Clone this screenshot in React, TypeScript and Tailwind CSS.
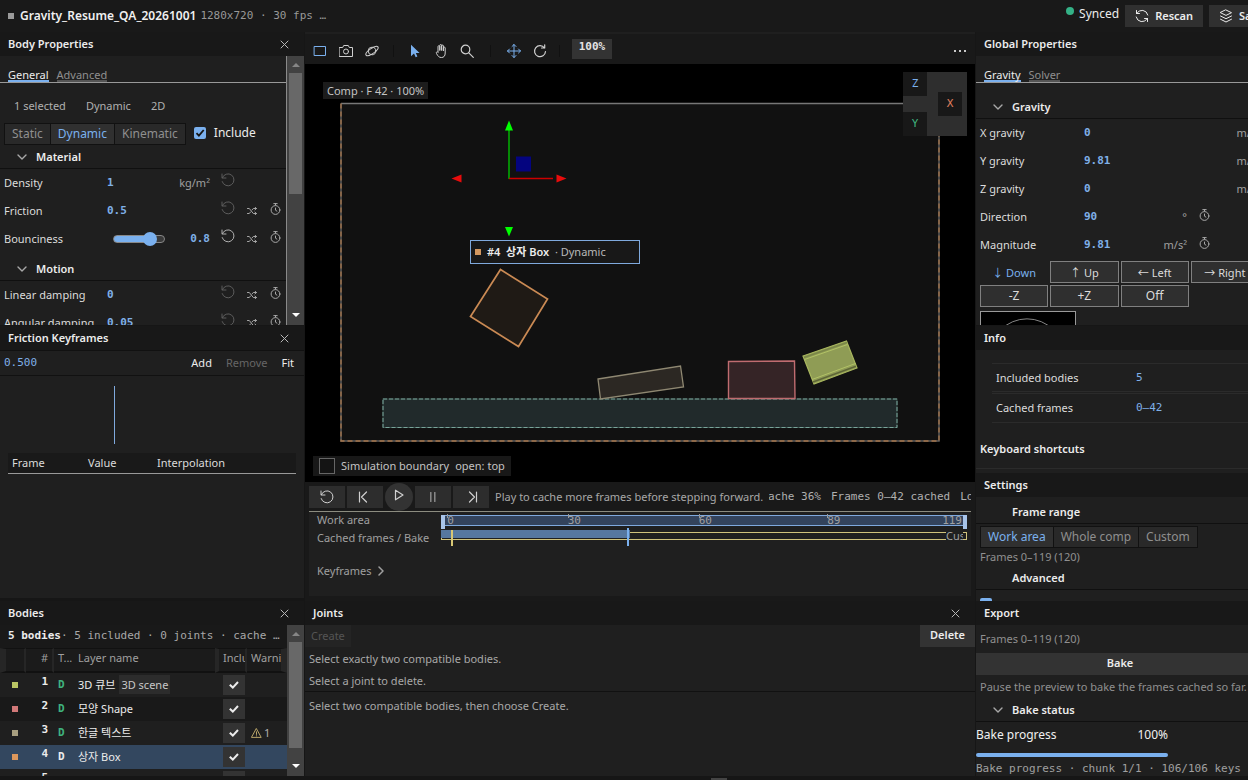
import React, { ReactNode, useState } from "react";

const svgProps = {
  fill: "none",
  stroke: "currentColor",
  strokeLinecap: "round" as const,
  strokeLinejoin: "round" as const,
};

const CloseIcon = () => (
  <svg width="9" height="9" viewBox="0 0 9 9" {...svgProps}>
    <path d="M1 1l7 7M8 1l-7 7" />
  </svg>
);
const ChevronDown = () => (
  <svg width="10" height="6" viewBox="0 0 10 6" {...svgProps} strokeWidth={1.4}>
    <path d="M1 1l4 4 4-4" />
  </svg>
);
const ResetIcon = ({ size = 14 }: { size?: number }) => (
  <svg width={size} height={size} viewBox="0 0 14 14" {...svgProps}>
    <path d="M1 1v4h4" />
    <path d="M1.3 4.8A6 6 0 1 1 1.2 8.6" />
  </svg>
);
const ShuffleIcon = () => (
  <svg width="10" height="8" viewBox="0 0 10 8" {...svgProps}>
    <path d="M.5 1.5h1.8l4 5h3M.5 6.5h1.8l1.2-1.5M5 3l1.3-1.5h3M8 .2l1.5 1.3L8 2.8M8 5.2l1.5 1.3L8 7.8" />
  </svg>
);
const StopwatchIcon = () => (
  <svg width="11" height="12" viewBox="0 0 11 12" {...svgProps}>
    <path d="M3.8.6h3.4M5.5.6v1.5M5.5 5v2.2l1.4.9" />
    <circle cx="5.5" cy="7" r="4.4" />
  </svg>
);

const Panel = ({ title, onClose, className, children }: { title: string; onClose?: boolean; className: string; children: ReactNode }) => (
  <section className={`flex min-w-0 flex-col overflow-hidden bg-[#1f1f1f] ${className}`}>
    <header className="flex h-6 shrink-0 items-center justify-between bg-[#181818] pr-[15px] pl-2">
      <h2 className="text-[11px] font-semibold text-[#ececec]">{title}</h2>
      {onClose && (
        <button aria-label={`Close ${title}`} className="text-[#b8b8b8]">
          <CloseIcon />
        </button>
      )}
    </header>
    {children}
  </section>
);

const Tabs = ({ items }: { items: string[] }) => (
  <div className="flex h-[27px] shrink-0 items-end gap-2 border-b border-[#999] px-2">
    {items.map((t, i) => (
      <button
        key={t}
        className={
          i === 0
            ? "h-[14px] border-b-2 border-[#7ab0ee] leading-[14px] text-[#ececec]"
            : "h-[14px] border-b-2 border-[#555] leading-[14px] text-[#8f8f8f]"
        }
      >
        {t}
      </button>
    ))}
  </div>
);

const Group = ({ title, chevron = true }: { title: string; chevron?: boolean }) => (
  <h3 className="flex h-6 shrink-0 items-center border-b border-[#101010] text-[11px] font-semibold text-[#ececec]">
    <span className="w-9 pl-[17px] text-[#a8a8a8]">{chevron && <ChevronDown />}</span>
    {title}
  </h3>
);

const Segmented = ({ items, active }: { items: string[]; active: string }) => (
  <div className="flex h-[22px] w-max border border-[#111] bg-[#292929] text-xs">
    {items.map((t) => (
      <button
        key={t}
        className={
          t === active
            ? "border-r border-[#111] bg-[#303030] px-[7px] text-[#7ab0ee] last:border-r-0"
            : "border-r border-[#111] px-[7px] text-[#8f8f8f] last:border-r-0"
        }
      >
        {t}
      </button>
    ))}
  </div>
);

const Scrollbar = ({ thumb }: { thumb: string }) => (
  <div className="flex w-[17px] shrink-0 flex-col items-center bg-[#424242]">
    <span className="flex h-[17px] items-center">
      <svg width="8" height="4" viewBox="0 0 8 4">
        <path d="M4 0l4 4H0z" fill="#868686" />
      </svg>
    </span>
    <span className={`w-[13px] bg-[#686868] ${thumb}`} />
    <span className="mt-auto flex h-5 items-center">
      <svg width="8" height="4" viewBox="0 0 8 4">
        <path d="M4 4l4-4H0z" fill="#fff" />
      </svg>
    </span>
  </div>
);

interface IField {
  label: string;
  value: string;
  unit?: string;
  slider?: boolean;
  keyed?: boolean;
  changed?: boolean;
}

const Field = ({ label, value, unit, slider, keyed, changed }: IField) => (
  <div className="flex h-7 shrink-0 items-center pl-1">
    <span className="w-[103px] shrink-0 whitespace-nowrap text-[#dcdcdc]">{label}</span>
    {slider && (
      <input
        type="range"
        aria-label={label}
        min={0}
        max={1}
        step={0.1}
        defaultValue={value}
        className="ml-1.5 h-2 w-[52px] appearance-none rounded-full border border-[#888] bg-linear-to-r from-[#7ab0ee] from-70% to-[#3a3a3a] to-70% [&::-webkit-slider-thumb]:size-[14px] [&::-webkit-slider-thumb]:appearance-none [&::-webkit-slider-thumb]:rounded-full [&::-webkit-slider-thumb]:bg-[#7ab0ee]"
      />
    )}
    <span className={slider ? "ml-auto font-mono font-bold text-[#7fb0e8]" : "font-mono font-bold text-[#7fb0e8]"}>{value}</span>
    <span className={slider ? "w-0" : "ml-auto text-[#a0a0a0]"}>{unit}</span>
    <button aria-label={`Reset ${label}`} className={changed ? "ml-[11px] pb-1.5 text-[#b0b0b0]" : "ml-[11px] pb-1.5 text-[#5c5c5c]"}>
      <ResetIcon />
    </button>
    <span className="flex w-[51px] items-center pl-3 text-[#a8a8a8]">
      {keyed && (
        <>
          <button aria-label={`Randomize ${label}`}>
            <ShuffleIcon />
          </button>
          <button aria-label={`Keyframe ${label}`} className="ml-[13px] pb-1">
            <StopwatchIcon />
          </button>
        </>
      )}
    </span>
  </div>
);

const BodyProperties = () => (
  <Panel title="Body Properties" onClose className="h-[293px] shrink-0">
    <div className="flex min-h-0 flex-1">
      <div className="flex min-w-0 flex-1 flex-col overflow-hidden border-r border-[#8a8a8a]">
        <Tabs items={["General", "Advanced"]} />
        <div className="mt-4 flex h-[14px] shrink-0 items-center gap-5 px-[14px] text-[#b0b0b0]">
          <span>1 selected</span>
          <span>Dynamic</span>
          <span>2D</span>
        </div>
        <div className="mt-2.5 flex shrink-0 items-center pl-1">
          <Segmented items={["Static", "Dynamic", "Kinematic"]} active="Dynamic" />
          <label className="flex items-center gap-2 pb-0.5 pl-2 text-xs text-[#ececec]">
            <span className="relative flex">
              <input type="checkbox" defaultChecked className="size-3 appearance-none rounded-xs bg-[#7ab0ee]" />
              <svg className="pointer-events-none absolute" width="12" height="12" viewBox="0 0 12 12" fill="none" stroke="#151515" strokeWidth="1.8">
                <path d="M2.5 6.2l2.4 2.4L9.7 3" />
              </svg>
            </span>
            Include
          </label>
        </div>
        <Group title="Material" />
        <Field label="Density" value="1" unit="kg/m²" />
        <Field label="Friction" value="0.5" keyed />
        <Field label="Bounciness" value="0.8" slider keyed changed />
        <div className="h-1 shrink-0" />
        <Group title="Motion" />
        <Field label="Linear damping" value="0" keyed />
        <Field label="Angular damping" value="0.05" keyed />
      </div>
      <Scrollbar thumb="h-[121px]" />
    </div>
  </Panel>
);

const FrictionKeyframes = () => (
  <Panel title="Friction Keyframes" onClose className="mt-px min-h-0 flex-1">
    <div className="flex h-[26px] shrink-0 items-center border-y border-[#111] pr-2.5 pl-1">
      <span className="font-mono text-[#7fb0e8]">0.500</span>
      <button className="ml-auto text-[#ececec]">Add</button>
      <button className="ml-3.5 text-[#666]" disabled>
        Remove
      </button>
      <button className="ml-3.5 text-[#ececec]">Fit</button>
    </div>
    <svg className="h-[77px] w-full shrink-0" viewBox="0 0 304 77" preserveAspectRatio="xMinYMin meet">
      <path d="M114.5 10v58" stroke="#7fa9dd" />
    </svg>
    <div className="px-2">
      <table className="w-full table-fixed text-left">
        <thead>
          <tr className="h-5 border-b border-[#999] bg-[#191919] text-[#dcdcdc]">
            <th className="w-[76px] pl-1 font-normal">Frame</th>
            <th className="w-[69px] pl-1 font-normal">Value</th>
            <th className="pl-1 font-normal">Interpolation</th>
          </tr>
        </thead>
      </table>
    </div>
  </Panel>
);

const BODIES = [
  { id: 1, color: "#bac564", name: "3D 큐브", tag: "3D scene" },
  { id: 2, color: "#d17878", name: "모양 Shape" },
  { id: 3, color: "#a89f80", name: "한글 텍스트", warnings: 1 },
  { id: 4, color: "#dc975c", name: "상자 Box", selected: true },
  { id: 5, color: "#6f9f97", name: "" },
];

const Bodies = () => (
  <Panel title="Bodies" onClose className="h-[175px] shrink-0">
    <div className="flex min-h-0 flex-1">
      <div className="min-w-0 flex-1 overflow-hidden">
        <p className="flex h-[23px] items-center overflow-hidden bg-[#191919] pb-0.5 pl-2 font-mono whitespace-pre text-[#a8a8a8]">
          <b className="text-[#ececec]">5 bodies</b>
          <span className="truncate pr-1.5">· 5 included · 0 joints · cache size</span>
        </p>
        <table className="w-full table-fixed border-separate border-spacing-0 text-left">
          <thead>
            <tr className="h-[25px] text-[#a0a0a0] [&>th]:border-[#262626] [&>th]:border-y-[#111] [&>th]:border-t [&>th]:border-b-2 [&>th]:bg-[#1b1b1b] [&>th]:pb-1 [&>th]:font-normal">
              <th className="w-[26px] border-r-2 border-l-6" aria-label="Color" />
              <th className="w-7 border-r-2 pr-1 text-right">#</th>
              <th className="w-5 pl-1 whitespace-nowrap">T...</th>
              <th className="pl-1">Layer name</th>
              <th className="w-8 border-r-2 border-l-4 pl-1">
                <span className="block overflow-hidden">Include</span>
              </th>
              <th className="w-10 border-r-6 pl-1">
                <span className="block overflow-hidden">Warnings</span>
              </th>
            </tr>
          </thead>
          <tbody>
            {BODIES.map((b) => (
              <tr
                key={b.id}
                className={b.selected ? "h-6 bg-[#33475f]" : "h-6 odd:bg-[#1f1f1f] even:bg-[#191919]"}
              >
                <td className="pl-3">
                  <span className="block size-1.5" style={{ backgroundColor: b.color }} />
                </td>
                <td className="pr-1.5 pb-1.5 text-right font-mono font-bold text-[#ececec]">{b.id}</td>
                <td className={b.selected ? "pl-1 font-mono font-bold text-[#ececec]" : "pl-1 font-mono font-bold text-[#3fb37f]"}>D</td>
                <td className="pl-1 whitespace-nowrap text-[#ececec]">
                  {b.name}
                  {b.tag && <span className="ml-1 bg-[#2c2c2c] px-0.5 py-0.5 text-[#c8c8c8]">{b.tag}</span>}
                </td>
                <td className="pl-2">
                  <button aria-label={`Include ${b.name}`} className="flex h-5 w-[22px] items-center justify-center bg-[#333]">
                    <svg width="10" height="8" viewBox="0 0 10 8" fill="none" stroke="#ececec" strokeWidth="2">
                      <path d="M.8 3.8l3 2.8L9 1" />
                    </svg>
                  </button>
                </td>
                <td className="pl-1">
                  {b.warnings && (
                    <span className="flex items-center gap-0.5 text-[#b0b0b0]">
                      <svg width="11" height="10" viewBox="0 0 11 10" {...svgProps} stroke="#b8a468">
                        <path d="M5.5.8l4.7 8.6H.8zM5.5 3.8v2.6M5.5 7.8v.2" />
                      </svg>
                      {b.warnings}
                    </span>
                  )}
                </td>
              </tr>
            ))}
          </tbody>
        </table>
      </div>
      <Scrollbar thumb="h-[106px]" />
    </div>
  </Panel>
);

const Toolbar = () => (
  <div className="flex h-8 shrink-0 items-center border-t-2 border-[#1f1f1f] bg-[#191919] pt-1 pl-2 text-[#d0d0d0]">
    <button aria-label="Frame" className="text-[#7ab0ee]">
      <svg width="14" height="14" viewBox="0 0 14 14" {...svgProps}>
        <path d="M1.5 2.5h11v9h-11z" />
      </svg>
    </button>
    <button aria-label="Snapshot" className="ml-3">
      <svg width="14" height="14" viewBox="0 0 14 14" {...svgProps}>
        <path d="M.5 3.5h3.2l1-2h4.6l1 2h3.2v9H.5z" />
        <circle cx="7" cy="7.5" r="2.5" />
      </svg>
    </button>
    <button aria-label="Orbit" className="ml-3">
      <svg width="14" height="14" viewBox="0 0 14 14" {...svgProps}>
        <circle cx="7" cy="7" r="3.8" />
        <ellipse cx="7" cy="7" rx="7.2" ry="2.6" transform="rotate(-35 7 7)" />
      </svg>
    </button>
    <span className="mx-3.5 h-3 w-px bg-[#111]" />
    <button aria-label="Select">
      <svg width="14" height="14" viewBox="0 0 14 14">
        <path d="M3 .8v11.4l3-2.6 1.7 3.6 1.7-.8-1.6-3.5h3.8z" fill="#7ab0ee" />
      </svg>
    </button>
    <button aria-label="Pan" className="ml-3">
      <svg width="14" height="14" viewBox="0 0 14 14" {...svgProps}>
        <path d="M4 8V2.6a.9.9 0 0 1 1.8 0V6.5V1.4a.9.9 0 0 1 1.8 0V6.5V2a.9.9 0 0 1 1.8 0v5V4a.9.9 0 0 1 1.8 0v5c0 3-1.4 4.5-3.8 4.5S4 12.3 2.5 9.5c-.7-1.3.6-2.4 1.5-1.3z" />
      </svg>
    </button>
    <button aria-label="Zoom" className="ml-3">
      <svg width="14" height="14" viewBox="0 0 14 14" {...svgProps} strokeWidth={1.2}>
        <circle cx="5.5" cy="5.5" r="4.3" />
        <path d="M8.8 8.8l4.5 4.5" />
      </svg>
    </button>
    <span className="mx-4 h-3 w-px bg-[#111]" />
    <button aria-label="Move" className="text-[#7ab0ee]">
      <svg width="14" height="14" viewBox="0 0 14 14" {...svgProps}>
        <path d="M7 .5v13M.5 7h13M5 2.5l2-2 2 2M5 11.5l2 2 2-2M2.5 5l-2 2 2 2M11.5 5l2 2-2 2" />
      </svg>
    </button>
    <button aria-label="Rotate" className="ml-3">
      <svg width="14" height="14" viewBox="0 0 14 14" {...svgProps} strokeWidth={1.2}>
        <path d="M11.5 4A5.5 5.5 0 1 0 12.5 7.5M8.5 4h3.2V.8" />
      </svg>
    </button>
    <span className="mx-3 h-3 w-px bg-[#111]" />
    <button className="-mt-1 h-5 w-10 bg-[#333] pb-1 font-mono leading-[14px] font-bold text-[#e4e4e4]">100%</button>
    <button aria-label="More" className="mr-2 ml-auto">
      <svg width="14" height="4" viewBox="0 0 14 4" fill="#c8c8c8">
        <path d="M1 1h2v2H1zM6 1h2v2H6zM11 1h2v2h-2z" />
      </svg>
    </button>
  </div>
);

const Viewport = () => (
  <div className="relative min-h-0 flex-1 overflow-hidden bg-black">
    <svg className="block h-full w-full" viewBox="0 0 670 418" preserveAspectRatio="xMinYMin meet">
      <rect x="36" y="39.5" width="598" height="337.5" fill="#111" />
      <path d="M36 39.5h598" stroke="#777" strokeWidth="1.5" />
      <path d="M36 39.5v337.5h598v-337.5" fill="none" stroke="#5f5f5f" strokeWidth="1.5" />
      <path d="M36 39.5v337.5h598v-337.5" fill="none" stroke="#a5744a" strokeWidth="1.3" strokeDasharray="5 3" />
      <rect x="78" y="335" width="514" height="28.5" fill="#212a2b" stroke="#38514c" />
      <rect x="78" y="335" width="514" height="28.5" fill="none" stroke="#78a49a" strokeDasharray="4 2" />
      <path d="M293 315l82.5-13 3 21-83 12z" fill="#2c2823" stroke="#8f8872" strokeWidth="1.3" />
      <path d="M423.5 297.5l66-.5.5 37.5h-66.5z" fill="#352426" stroke="#c06c70" strokeWidth="1.4" />
      <path d="M498 292l43.5-15L552 304l-43 16z" fill="#8f9c55" stroke="#a9b75e" strokeWidth="1.2" />
      <path d="M499 293.5l43-15" stroke="#7a8648" strokeWidth="1.5" />
      <path d="M508 318l43-15.8" stroke="#5e6637" strokeWidth="1.6" />
      <path d="M499.5 295.5l43-15M507 315.5l43.5-16" stroke="#b2c266" strokeWidth="1" />
      <path d="M195.5 205.5l47 29.5-29 47.5-48-30z" fill="#1f1a15" stroke="#ca8a54" strokeWidth="1.7" />
      <rect x="211" y="92.5" width="15" height="15" fill="#04047f" />
      <path d="M204 115V65" stroke="#0c0" strokeWidth="1.3" />
      <path d="M204 56.5l4 10h-8zM200 163h8l-4 9.5z" fill="#0f0" />
      <path d="M204 114.5h44" stroke="#c00" strokeWidth="1.3" />
      <path d="M261.5 114.5l-10-4v8zM146.5 114.5l10-4v8z" fill="#e80c0c" />
    </svg>
    <span className="absolute top-[18px] left-[18px] h-[17px] bg-[#1c1c1c] px-1 leading-[17px] text-[#c4c4c4]">Comp · F 42 · 100%</span>
    <div className="absolute top-[176px] left-[165px] flex h-6 w-[170px] items-center border border-[#7fa9dd] bg-[#181818] pl-1 whitespace-pre text-[#b8b8b8]">
      <span className="mr-1.5 size-1.5 bg-[#d3975f]" />
      <b className="font-semibold text-[#ececec]">#4  상자 Box</b>
      <span>  · Dynamic</span>
    </div>
    <div className="absolute top-2 right-2 size-16 bg-[#2e2e2e] font-mono">
      <button className="absolute top-0 left-0 size-6 bg-[#181818] text-[#7ab0ee]">Z</button>
      <button className="absolute bottom-0 left-0 size-6 bg-[#181818] text-[#3fb37f]">Y</button>
      <button className="absolute top-5 right-[5px] size-6 bg-[#181818] text-[#e08060]">X</button>
    </div>
    <label className="absolute bottom-1.5 left-2 flex h-5 items-center bg-[#181818] px-1.5 text-[#c4c4c4]">
      <input type="checkbox" className="mr-1.5 size-4 appearance-none border border-[#666] bg-[#141414]" />
      Simulation boundary
      <span className="ml-1.5">open: top</span>
    </label>
  </div>
);

const Transport = () => {
  const [playing, setPlaying] = useState(false);
  return (
    <div className="mx-1 flex h-[30px] shrink-0 items-center gap-0.5 border-b border-[#8c8c80] text-[#d0d0d0]">
      <button aria-label="Reset" className="flex h-[22px] w-9 items-center justify-center bg-[#2d2d2d]">
        <ResetIcon />
      </button>
      <button aria-label="Previous frame" className="flex h-[22px] w-9 items-center justify-center bg-[#2d2d2d] pr-1">
        <svg width="10" height="12" viewBox="0 0 10 12" {...svgProps} strokeWidth={1.2}>
          <path d="M1.5 1v10M8.5 1L3.5 6l5 5" />
        </svg>
      </button>
      <button aria-label="Play" onClick={() => setPlaying(!playing)} className="flex size-7 items-center justify-center rounded-full bg-[#333] pb-1">
        <svg width="10" height="12" viewBox="0 0 10 12" {...svgProps} strokeWidth={1.2}>
          <path d="M1.5 1.2v9.6L9 6z" />
        </svg>
      </button>
      <button aria-label="Pause" className="flex h-[22px] w-9 items-center justify-center bg-[#2d2d2d] text-[#909090]">
        <svg width="8" height="10" viewBox="0 0 8 10" {...svgProps} strokeWidth={1.4}>
          <path d="M1.8 .5v9M5.8 .5v9" />
        </svg>
      </button>
      <button aria-label="Next frame" className="flex h-[22px] w-9 items-center justify-center bg-[#2d2d2d] pl-1">
        <svg width="10" height="12" viewBox="0 0 10 12" {...svgProps} strokeWidth={1.2}>
          <path d="M8.5 1v10M1.5 1l5 5-5 5" />
        </svg>
      </button>
      <span className="ml-1 shrink-0 text-[#a8a8a8]">Play to cache more frames before stepping forward.</span>
      <div className="ml-1 flex min-w-0 flex-1 gap-2.5 overflow-hidden font-mono whitespace-nowrap text-[#b0b0b0]">
        <span className="-ml-2">Cache 36%</span>
        <span>Frames 0–42 cached</span>
        <span>Loop</span>
      </div>
    </div>
  );
};

const TICKS = [
  { frame: 0, left: 1 },
  { frame: 30, left: 24 },
  { frame: 60, left: 49 },
  { frame: 89, left: 73.5 },
];

const Timeline = () => (
  <div className="mx-1 flex h-[84px] shrink-0 flex-col bg-[#1f1f1f] pr-1 pl-2 text-[#a0a0a0]">
    <div className="flex h-4 items-center">
      <span className="w-[124px]">Work area</span>
      <div className="relative h-[11px] flex-1 border border-[#7fa9dd] bg-[#33435c] font-mono leading-[10px]">
        {TICKS.map((t) => (
          <span key={t.frame} className="absolute top-0" style={{ left: `${t.left}%` }}>
            <span className="absolute -top-0.5 left-0 h-1 w-px bg-[#999]" />
            {t.frame}
          </span>
        ))}
        <span className="absolute top-0 right-1">119</span>
        <span className="absolute -top-px -left-px h-[14px] w-1 bg-[#a8c4e8]" />
        <span className="absolute -top-px -right-px h-[14px] w-1 bg-[#a8c4e8]" />
      </div>
    </div>
    <div className="flex h-[19px] items-center">
      <span className="w-[124px]">Cached frames / Bake</span>
      <div className="relative -mt-1 h-2 flex-1 border border-[#cfc27c]">
        <span className="absolute -top-[3px] -left-px h-2 w-[36%] bg-[#56779f]" />
        <span className="absolute -top-[3px] left-[9px] h-4 w-0.5 bg-[#d8c774]" />
        <span className="absolute -top-[5px] left-[35.3%] h-[18px] w-0.5 bg-[#7ab0ee]" />
        <span className="absolute -top-[5px] right-[3px] h-4 w-[17px] overflow-hidden bg-[#1f1f1f]">Custom</span>
      </div>
    </div>
    <button className="mt-4 flex h-4 items-center gap-[7px]">
      Keyframes
      <svg width="6" height="10" viewBox="0 0 6 10" {...svgProps} strokeWidth={1.5}>
        <path d="M1 1l4 4-4 4" />
      </svg>
    </button>
  </div>
);

const Joints = () => (
  <Panel title="Joints" onClose className="h-[175px] shrink-0">
    <div className="flex h-[22px] shrink-0 items-center justify-between">
      <button disabled className="h-[22px] bg-[#242424] px-1.5 text-[#555]">
        Create
      </button>
      <button className="h-[22px] bg-[#333] px-2.5 pb-0.5 font-semibold text-[#ececec]">Delete</button>
    </div>
    <div className="border-b border-[#111] px-1 pt-px leading-[22px] text-[#a8a8a8]">
      <p>Select exactly two compatible bodies.</p>
      <p className="h-[21px]">Select a joint to delete.</p>
    </div>
    <p className="px-1 pt-[3px] leading-[22px] text-[#a8a8a8]">Select two compatible bodies, then choose Create.</p>
  </Panel>
);

const DIRECTIONS = ["↓ Down", "↑ Up", "← Left", "→ Right", "-Z", "+Z", "Off"];

const GravityField = ({ label, value, unit, keyed }: IField) => (
  <div className="flex h-7 shrink-0 items-center pr-1 pl-1">
    <span className="w-[104px]">{label}</span>
    <span className="font-mono font-bold text-[#7fb0e8]">{value}</span>
    <span className={keyed ? "ml-auto pr-3 text-[#a0a0a0]" : "ml-auto text-[#a0a0a0]"}>{unit}</span>
    {keyed && (
      <button aria-label={`Keyframe ${label}`} className="w-[61px] pb-1 text-[#a8a8a8]">
        <StopwatchIcon />
      </button>
    )}
  </div>
);

const GlobalProperties = () => (
  <Panel title="Global Properties" className="h-[293px] shrink-0">
    <Tabs items={["Gravity", "Solver"]} />
    <div className="h-3 shrink-0" />
    <Group title="Gravity" />
    <GravityField label="X gravity" value="0" unit="m/s²" />
    <GravityField label="Y gravity" value="9.81" unit="m/s²" />
    <GravityField label="Z gravity" value="0" unit="m/s²" />
    <GravityField label="Direction" value="90" unit="°" keyed />
    <GravityField label="Magnitude" value="9.81" unit="m/s²" keyed />
    <div className="mt-0.5 grid shrink-0 grid-cols-4 gap-0.5 pr-[5px] pl-1">
      {DIRECTIONS.map((d, i) => (
        <button
          key={d}
          className={
            i === 0
              ? "h-[22px] pt-0.5 text-[#7ab0ee]"
              : i < 4
                ? "h-[22px] border border-[#808080] bg-[#2f2f2f] pt-0.5 text-[#dcdcdc]"
                : "h-[22px] border border-[#808080] bg-[#2f2f2f] text-xs text-[#dcdcdc]"
          }
        >
          {d}
        </button>
      ))}
    </div>
    <svg className="mt-1 ml-1 shrink-0 border border-[#999] bg-black" width="96" height="96" viewBox="0 0 96 96" fill="none" stroke="#888">
      <circle cx="47" cy="45" r="38" />
    </svg>
  </Panel>
);

const Info = () => (
  <Panel title="Info" className="mt-px h-[147px] shrink-0">
    <dl className="mt-[13px] ml-4">
      <div className="flex h-[29px] items-center border-y border-[#2b2b2b] pl-1">
        <dt className="w-[140px]">Included bodies</dt>
        <dd className="font-mono text-[#7fb0e8]">5</dd>
      </div>
      <div className="mt-px flex h-[30px] items-center border-y border-[#2b2b2b] pl-1">
        <dt className="w-[140px]">Cached frames</dt>
        <dd className="font-mono text-[#7fb0e8]">0–42</dd>
      </div>
    </dl>
    <h3 className="mt-[18px] border-b border-[#2b2b2b] pb-[11px] pl-1 leading-4 font-semibold text-[#ececec]">Keyboard shortcuts</h3>
  </Panel>
);

const Settings = () => (
  <Panel title="Settings" className="min-h-0 flex-1">
    <div className="h-[3px] shrink-0" />
    <Group title="Frame range" chevron={false} />
    <div className="mt-0.5 ml-1">
      <Segmented items={["Work area", "Whole comp", "Custom"]} active="Work area" />
    </div>
    <p className="pl-1 leading-[18px] text-[#909090]">Frames 0–119 (120)</p>
    <Group title="Advanced" chevron={false} />
    <input type="checkbox" aria-label="Advanced option" defaultChecked className="mt-2 ml-1 size-3 shrink-0 appearance-none rounded-xs bg-[#7ab0ee]" />
  </Panel>
);

const ExportPanel = () => (
  <Panel title="Export" className="h-[175px] shrink-0">
    <p className="h-7 shrink-0 pl-1 leading-7 text-[#909090]">Frames 0–119 (120)</p>
    <button className="h-[22px] shrink-0 bg-[#333] pb-0.5 font-semibold text-[#ececec]">Bake</button>
    <p className="h-[23px] shrink-0 pl-1 leading-6 whitespace-nowrap text-[#909090]">Pause the preview to bake the frames cached so far.</p>
    <Group title="Bake status" />
    <div className="w-48 shrink-0 text-xs text-[#f0f0f0]">
      <div className="flex h-[31px] items-center justify-between pb-1.5">
        <label htmlFor="bake">Bake progress</label>
        <span>100%</span>
      </div>
      <progress
        id="bake"
        value={100}
        max={100}
        className="block h-1 w-full appearance-none overflow-hidden rounded-full [&::-webkit-progress-bar]:bg-[#333] [&::-webkit-progress-value]:bg-[#7ab0ee]"
      />
    </div>
    <p className="pt-1 font-mono leading-4 whitespace-nowrap text-[#a0a0a0]">Bake progress · chunk 1/1 · 106/106 keys</p>
  </Panel>
);

export default function App() {
  return (
    <div className="flex h-screen flex-col overflow-hidden bg-[#161616] font-['Noto_Sans','Noto_Sans_CJK_KR',sans-serif] text-[11px] leading-4 text-[#dcdcdc] [&_.font-mono]:font-['DejaVu_Sans_Mono',monospace]">
      <header className="flex h-8 shrink-0 items-center overflow-hidden bg-[#191919] pl-2">
        <span className="size-1.5 shrink-0 bg-[#9a9a9a]" />
        <h1 className="ml-1.5 text-xs font-semibold text-[#f0f0f0]">Gravity_Resume_QA_20261001</h1>
        <span className="ml-1 font-mono whitespace-nowrap text-[#989898]">1280x720 · 30 fps …</span>
        <div className="-mr-4 ml-auto flex shrink-0 items-center">
          <span className="mr-[5px] mb-2.5 size-2 rounded-full bg-[#34b287]" />
          <span className="mr-1.5 mb-1 text-xs text-[#ececec]">Synced</span>
          <button className="mr-1.5 flex h-[22px] items-center gap-1.5 bg-[#303030] px-2.5 font-semibold text-[#ececec]">
            <svg width="14" height="14" viewBox="0 0 14 14" {...svgProps}>
              <path d="M1.5 4.5V1.5M1.5 4.5h3M1.8 4.3A6 6 0 0 1 12.8 6M12.5 12.5v-3M12.5 9.5h-3M12.2 9.7A6 6 0 0 1 1.2 8" />
            </svg>
            Rescan
          </button>
          <button className="flex h-[22px] items-center gap-1.5 bg-[#303030] pl-2.5 font-semibold text-[#ececec]">
            <svg width="14" height="14" viewBox="0 0 14 14" {...svgProps}>
              <path d="M7 1l5.5 2.7L7 6.4 1.5 3.7zM1.5 7L7 9.7 12.5 7M1.5 10.2L7 13l5.5-2.8" />
            </svg>
            Save
          </button>
        </div>
      </header>
      <main className="grid min-h-0 flex-1 grid-cols-[304px_minmax(0,1fr)_272px] grid-rows-[minmax(0,1fr)] gap-x-px overflow-hidden">
        <div className="flex min-h-0 flex-col">
          <BodyProperties />
          <FrictionKeyframes />
          <div className="h-[3px] shrink-0" />
          <Bodies />
        </div>
        <div className="flex min-h-0 flex-col bg-[#191919]">
          <Toolbar />
          <Viewport />
          <Transport />
          <Timeline />
          <div className="h-[5px] shrink-0" />
          <Joints />
        </div>
        <div className="flex min-h-0 w-72 flex-col">
          <GlobalProperties />
          <Info />
          <Settings />
          <ExportPanel />
        </div>
      </main>
      <footer className="flex h-1 shrink-0 items-end bg-[#161616]">
        <span className="ml-[57%] h-0.5 w-4 bg-[#444]" />
      </footer>
    </div>
  );
}
